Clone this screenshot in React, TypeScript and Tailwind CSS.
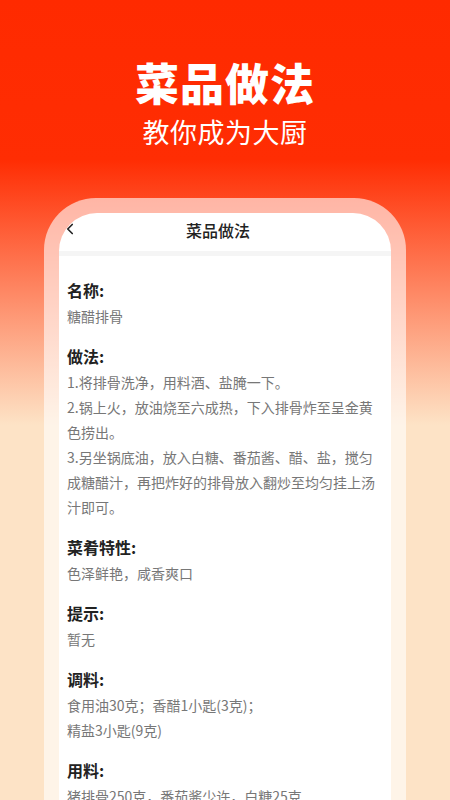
import { ChevronLeft } from 'lucide-react'

const sections = [
  { title: '名称:', lines: ['糖醋排骨'] },
  {
    title: '做法:',
    lines: [
      '1.将排骨洗净，用料酒、盐腌一下。',
      '2.锅上火，放油烧至六成热，下入排骨炸至呈金黄色捞出。',
      '3.另坐锅底油，放入白糖、番茄酱、醋、盐，搅匀成糖醋汁，再把炸好的排骨放入翻炒至均匀挂上汤汁即可。',
    ],
  },
  { title: '菜肴特性:', lines: ['色泽鲜艳，咸香爽口'] },
  { title: '提示:', lines: ['暂无'] },
  { title: '调料:', lines: ['食用油30克；香醋1小匙(3克)；', '精盐3小匙(9克)'] },
  { title: '用料:', lines: ['猪排骨250克，番茄酱少许，白糖25克'] },
]

export default function App() {
  return (
    <div
      className="h-[800px] w-[450px] overflow-hidden bg-[linear-gradient(180deg,#ff2a00_0px,#ff2d03_160px,#fde3c6_425px,#fde3c6_800px)]"
      style={{ fontFamily: '"Noto Sans CJK SC", "Noto Sans", sans-serif' }}
    >
      {/* Hero */}
      <div className="flex flex-col items-center pt-[56px] text-white">
        <h1 className="text-[44px] font-black leading-[52px] tracking-[1px]">菜品做法</h1>
        <p className="mt-[6px] text-[27px] leading-[36px] tracking-[0.5px]">教你成为大厨</p>
      </div>

      {/* Phone frame */}
      <div className="mx-[44px] mt-[48px] h-[700px] rounded-t-[52px] bg-white/60 px-[15px] pt-[15px]">
        <div className="h-full rounded-t-[38px] bg-white">
          <div className="relative flex h-[38px] items-center justify-center pb-[4px] pr-[14px]">
            <ChevronLeft className="absolute left-[2px] top-[7px] h-[18px] w-[18px] text-[#222]" strokeWidth={2.2} />
            <span className="text-[16px] font-medium text-[#222]">菜品做法</span>
          </div>
          <div className="h-[5px] bg-[#f5f5f5]" />

          <div className="px-[8px] pt-[20px]">
            {sections.map((s) => (
              <div key={s.title} className="mb-[13px]">
                <h2 className="text-[16px] font-bold leading-[28px] text-[#222]">{s.title}</h2>
                {s.lines.map((line) => (
                  <p key={line} className="text-[14px] leading-[25px] text-[#777]">
                    {line}
                  </p>
                ))}
              </div>
            ))}
          </div>
        </div>
      </div>
    </div>
  )
}
